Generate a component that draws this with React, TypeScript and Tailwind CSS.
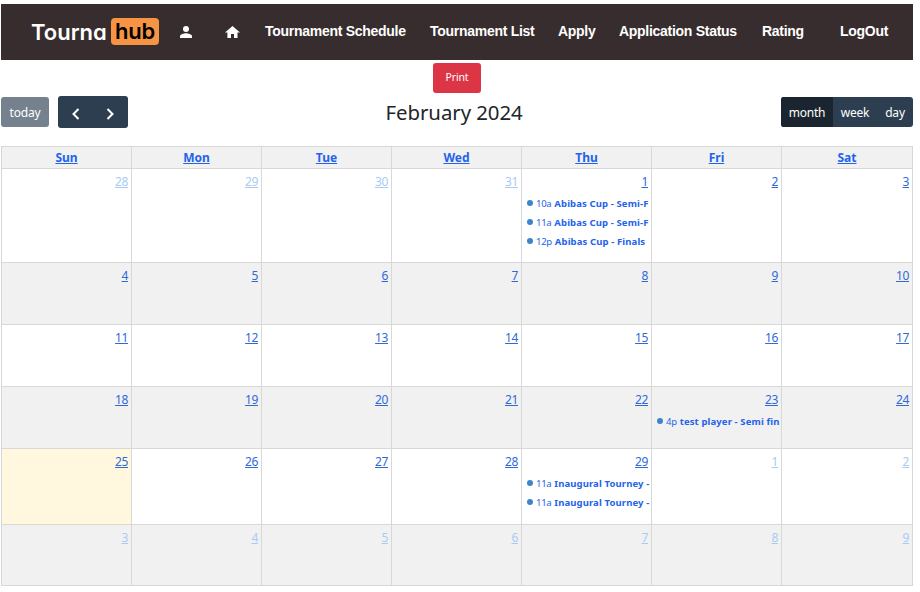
import { ReactNode } from "react";

type CalendarEvent = { time: string; title: string };
type Week = { height: string; shade: string; days: number[]; muted: (i: number) => boolean };

const dayNames = ["Sun", "Mon", "Tue", "Wed", "Thu", "Fri", "Sat"];

const weeks: Week[] = [
  { height: "h-[94px]", shade: "bg-white", days: [28, 29, 30, 31, 1, 2, 3], muted: (i) => i < 4 },
  { height: "h-[62px]", shade: "bg-[#f1f1f1]", days: [4, 5, 6, 7, 8, 9, 10], muted: () => false },
  { height: "h-[62px]", shade: "bg-white", days: [11, 12, 13, 14, 15, 16, 17], muted: () => false },
  { height: "h-[62px]", shade: "bg-[#f1f1f1]", days: [18, 19, 20, 21, 22, 23, 24], muted: () => false },
  { height: "h-[76px]", shade: "bg-white", days: [25, 26, 27, 28, 29, 1, 2], muted: (i) => i > 4 },
  { height: "h-[61px]", shade: "bg-[#f1f1f1]", days: [3, 4, 5, 6, 7, 8, 9], muted: () => true },
];

const events: Record<string, CalendarEvent[]> = {
  "0-4": [
    { time: "10a", title: "Abibas Cup - Semi-F" },
    { time: "11a", title: "Abibas Cup - Semi-F" },
    { time: "12p", title: "Abibas Cup - Finals" },
  ],
  "3-5": [{ time: "4p", title: "test player - Semi fin" }],
  "4-4": [
    { time: "11a", title: "Inaugural Tourney -" },
    { time: "11a", title: "Inaugural Tourney -" },
  ],
};

const columns = "grid grid-cols-[130px_130px_130px_130px_130px_130px_131px]";

function NavLink({ className, children }: { className: string; children: ReactNode }) {
  return (
    <a className={`shrink-0 whitespace-nowrap pb-[2px] font-['Liberation_Sans',sans-serif] text-[14px] font-bold tracking-[-0.28px] text-white ${className}`}>
      {children}
    </a>
  );
}

function Navbar() {
  return (
    <nav className="flex h-14 items-center bg-[#372d2e]">
      <div className="ml-[30px] flex w-[128px] shrink-0 items-center justify-between pb-px font-['Inter',sans-serif] text-[22px] leading-none [font-feature-settings:'cv11']">
        <span className="font-semibold text-white">Tourna</span>
        <span className="flex h-[27px] w-12 items-center justify-center rounded-[4px] bg-[#f79443] pb-px font-semibold tracking-[-0.2px] text-black">hub</span>
      </div>
      <svg className="ml-[21px] h-3 w-3 shrink-0" viewBox="0 0 12 12" fill="white">
        <circle cx="6" cy="3" r="3" />
        <path d="M0 12v-1.7C0 8.3 4 7.3 6 7.3s6 1 6 3V12z" />
      </svg>
      <svg className="ml-[33px] h-3 w-[15px] shrink-0" viewBox="0 0 15 12" fill="white">
        <path d="M6 12V8h3v4h3.5V6.5H15L7.5 0 0 6.5h2.4V12z" />
      </svg>
      <NavLink className="ml-[25px] w-[141px]">Tournament Schedule</NavLink>
      <NavLink className="ml-[24px] w-[105px]">Tournament List</NavLink>
      <NavLink className="ml-[23px] w-[38px]">Apply</NavLink>
      <NavLink className="ml-[23px] w-[119px]">Application Status</NavLink>
      <NavLink className="ml-[24px] w-[43px]">Rating</NavLink>
      <NavLink className="ml-[35px] w-[49px]">LogOut</NavLink>
    </nav>
  );
}

function Chevron({ d }: { d: string }) {
  return (
    <svg className="h-3 w-2" viewBox="0 0 8 12" fill="none" stroke="white" strokeWidth="2">
      <path d={d} />
    </svg>
  );
}

function Toolbar() {
  return (
    <div className="mt-[3px] flex h-8 items-center justify-between text-[12px] text-white">
      <div className="flex w-[127px] items-center justify-between">
        <button className="h-[30px] w-12 rounded-[3px] bg-[#75818d] pt-px tracking-[-0.2px]">today</button>
        <div className="flex h-8 w-[70px] overflow-hidden rounded-[3px] bg-[#2c3e50]">
          <button className="flex w-[35px] items-center justify-center pt-[3px]"><Chevron d="M6.5 1 1.5 6l5 5" /></button>
          <button className="flex w-[35px] items-center justify-center pt-[3px] pr-px"><Chevron d="M1.5 1l5 5-5 5" /></button>
        </div>
      </div>
      <h2 className="w-[138px] whitespace-nowrap text-[20.4px] leading-8 tracking-[-0.05px] text-[#212529]">February 2024</h2>
      <div className="flex h-[30px] w-[132px] overflow-hidden rounded-[3px] bg-[#2c3e50]">
        <button className="w-[52px] bg-[#1a252f] pt-px tracking-[-0.2px]">month</button>
        <button className="w-[44px] pt-px tracking-[-0.2px]">week</button>
        <button className="w-9 pt-px tracking-[-0.2px]">day</button>
      </div>
    </div>
  );
}

function EventRow({ time, title }: CalendarEvent) {
  return (
    <a className="flex h-[19px] items-center whitespace-nowrap pl-[5px] text-[9.5px] tracking-[0.12px] text-[#2463eb]">
      <span className="mr-[3px] mb-px h-[6px] w-[6px] shrink-0 rounded-full bg-[#3d85c8]" />
      <span className="mr-[3px] pt-px tracking-[-0.3px]">{time}</span>
      <span className="pt-px font-bold">{title}</span>
    </a>
  );
}

function Calendar() {
  return (
    <div className="mt-[18px] border-r border-b border-[#d8d8d8]">
      <div className={`${columns} h-[22px] bg-[#f1f1f1]`}>
        {dayNames.map((name) => (
          <div key={name} className="border-t border-l border-[#d8d8d8] text-center text-[12px] font-bold leading-[22px] text-[#2463eb] underline">
            {name}
          </div>
        ))}
      </div>
      {weeks.map((week, w) => (
        <div key={w} className={`${columns} ${week.height} ${week.shade}`}>
          {week.days.map((day, d) => (
            <div key={d} className={`min-w-0 border-t border-l border-[#d8d8d8] ${w === 4 && d === 0 ? "bg-[#fff8df]" : ""}`}>
              <div className="h-[25px] pr-[3px] pt-[3px] text-right text-[12px] leading-5">
                <a className={`tracking-[-0.4px] underline ${week.muted(d) ? "text-[#a9cbf3]" : "text-[#2f69d8]"}`}>{day}</a>
              </div>
              {(events[`${w}-${d}`] ?? []).map((event, i) => (
                <EventRow key={i} {...event} />
              ))}
            </div>
          ))}
        </div>
      ))}
    </div>
  );
}

export default function App() {
  return (
    <main className="h-[592px] w-[920px] overflow-hidden bg-white pl-px pt-1 font-['Noto_Sans',sans-serif]">
      <div className="w-[912px]">
        <Navbar />
        <div className="flex justify-center pt-[3px]">
          <button className="h-[30px] w-12 rounded-[3px] bg-[#dc3545] pb-px text-[10.5px] tracking-[-0.15px] text-white">Print</button>
        </div>
        <Toolbar />
        <Calendar />
      </div>
    </main>
  );
}
